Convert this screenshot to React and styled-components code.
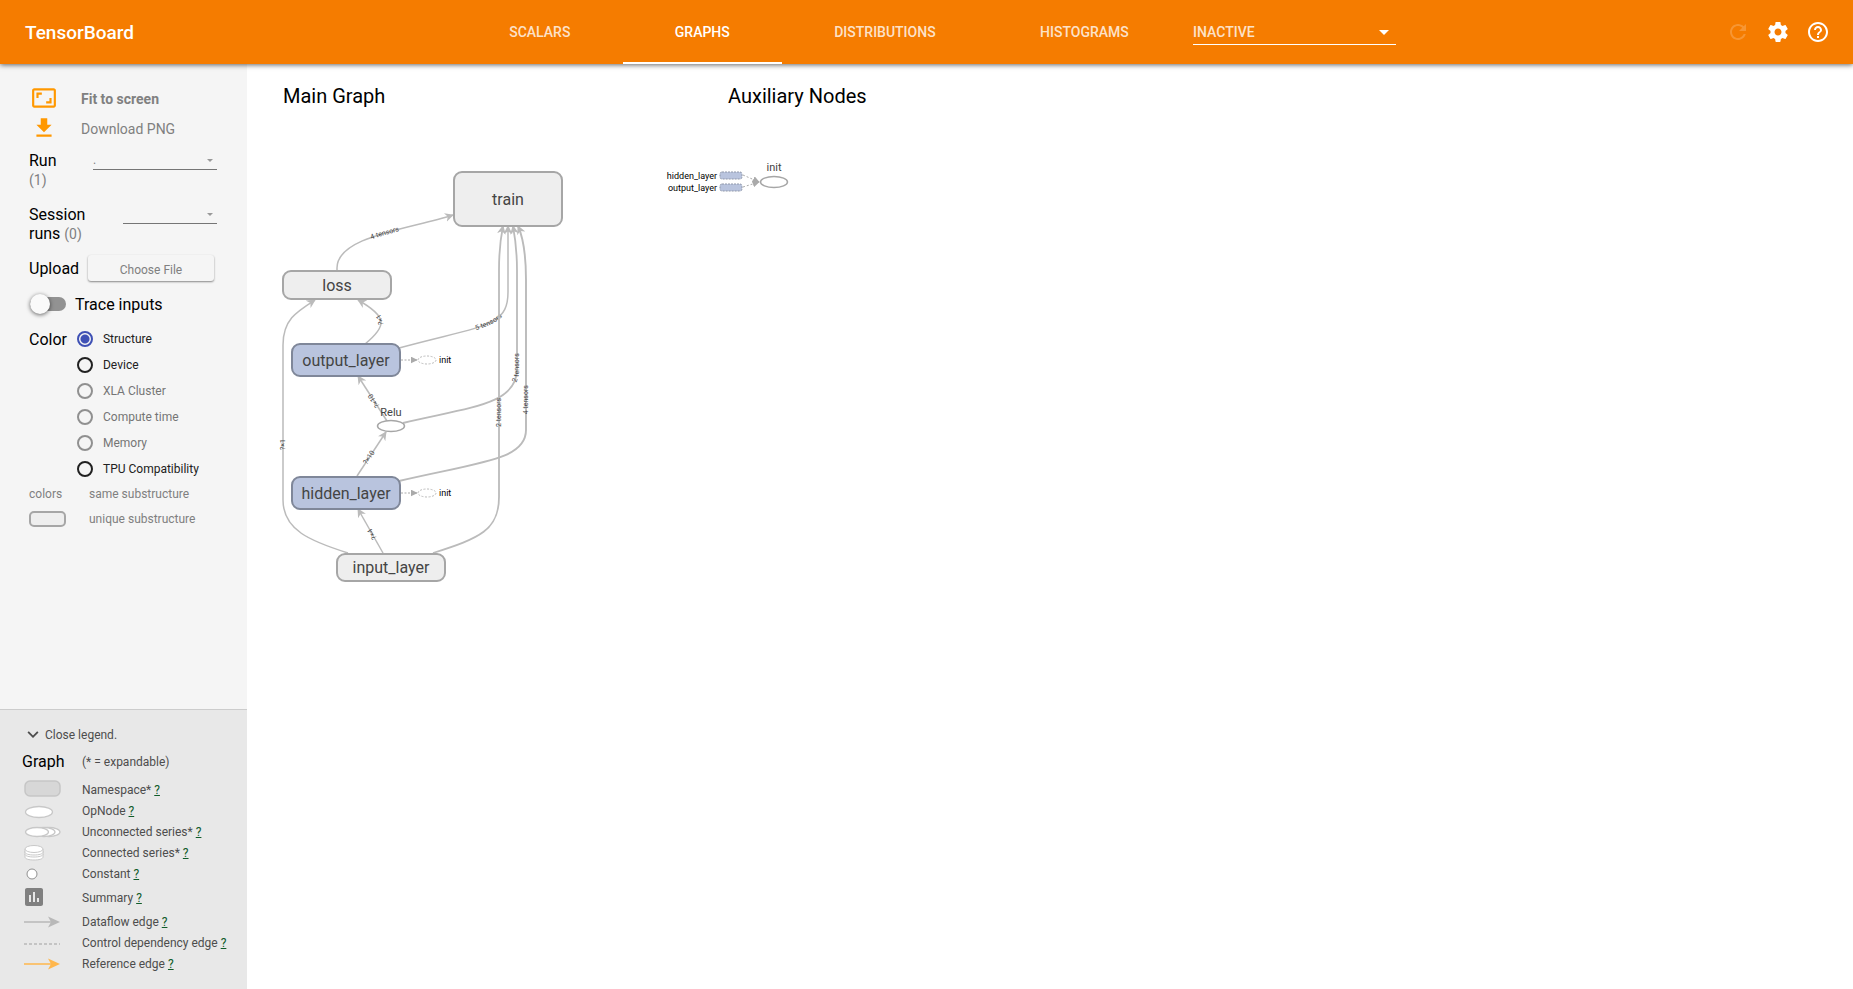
import React from 'react';
import styled, { createGlobalStyle, css } from 'styled-components';

const GlobalStyle = createGlobalStyle`
  *, *::before, *::after { box-sizing: border-box; }
  body { margin: 0; background: #fff; color: #000; font-family: Roboto, "Liberation Sans", sans-serif; }
  button, input, select { font: inherit; }
`;

const Page = styled.div`
  display: flex;
  flex-direction: column;
  min-height: 100vh;
`;

/* ---------- Header ---------- */

const Header = styled.header`
  position: relative;
  z-index: 1;
  display: flex;
  align-items: center;
  height: 64px;
  padding: 0 23px 0 25px;
  background: #f57c00;
  color: #fff;
  box-shadow: 0 1px 5px rgba(0, 0, 0, 0.6);
`;

const Brand = styled.h1`
  flex: 0 0 432px;
  margin: 0;
  font-size: 19px;
  font-weight: 500;
`;

const Tabs = styled.nav`
  display: flex;
  flex: 0 1 724px;
  align-self: stretch;
  margin-right: 12px;
`;

const Tab = styled.button`
  flex: 1 1 auto;
  padding: 2px 12px 0;
  border: 0;
  border-bottom: 2px solid ${(p) => (p.$active ? '#fff' : 'transparent')};
  background: none;
  color: ${(p) => (p.$active ? '#fff' : 'rgba(255, 255, 255, 0.8)')};
  font-size: 14px;
  font-weight: 500;
`;

const Dropdown = styled.span`
  position: relative;
  display: block;
  flex: 0 0 auto;
  width: ${(p) => p.$width}px;
  color: ${(p) => p.$arrow};

  &::after {
    content: '';
    position: absolute;
    right: ${(p) => p.$inset}px;
    top: 50%;
    margin-top: -2px;
    border: solid transparent;
    border-width: ${(p) => p.$size}px ${(p) => p.$size}px 0;
    border-top-color: currentColor;
    pointer-events: none;
  }
`;

const HeaderSelect = styled.select`
  appearance: none;
  display: block;
  width: 100%;
  height: 26px;
  padding: 0;
  border: 0;
  border-bottom: 1px solid #fff;
  border-radius: 0;
  background: none;
  color: rgba(255, 255, 255, 0.8);
  font-size: 14px;
  font-weight: 500;
`;

const HeaderActions = styled.div`
  display: flex;
  gap: 16px;
  margin-left: auto;
`;

const IconButton = styled.button`
  display: block;
  width: 24px;
  height: 24px;
  padding: 0;
  border: 0;
  background: none;
  color: ${(p) => (p.disabled ? 'rgba(255, 255, 255, 0.2)' : '#fff')};
`;

const Icon = ({ d, size = 24 }) => (
  <svg width={size} height={size} viewBox="0 0 24 24" fill="currentColor" aria-hidden="true">
    <path d={d} />
  </svg>
);

const PATHS = {
  refresh:
    'M17.65 6.35C16.2 4.9 14.21 4 12 4c-4.42 0-7.99 3.58-7.99 8s3.57 8 7.99 8c3.73 0 6.84-2.55 7.73-6h-2.08c-.82 2.33-3.04 4-5.65 4-3.31 0-6-2.69-6-6s2.69-6 6-6c1.66 0 3.14.69 4.22 1.78L13 11h7V4l-2.35 2.35z',
  settings:
    'M19.43 12.98c.04-.32.07-.64.07-.98s-.03-.66-.07-.98l2.11-1.65c.19-.15.24-.42.12-.64l-2-3.46c-.12-.22-.39-.3-.61-.22l-2.49 1c-.52-.4-1.08-.73-1.69-.98l-.38-2.65C14.46 2.18 14.25 2 14 2h-4c-.25 0-.46.18-.49.42l-.38 2.65c-.61.25-1.17.59-1.69.98l-2.49-1c-.23-.09-.49 0-.61.22l-2 3.46c-.13.22-.07.49.12.64l2.11 1.65c-.04.32-.07.65-.07.98s.03.66.07.98l-2.11 1.65c-.19.15-.24.42-.12.64l2 3.46c.12.22.39.3.61.22l2.49-1c.52.4 1.08.73 1.69.98l.38 2.65c.03.24.24.42.49.42h4c.25 0 .46-.18.49-.42l.38-2.65c.61-.25 1.17-.59 1.69-.98l2.49 1c.23.09.49 0 .61-.22l2-3.46c.12-.22.07-.49-.12-.64l-2.11-1.65zM12 15.5c-1.93 0-3.5-1.57-3.5-3.5s1.57-3.5 3.5-3.5 3.5 1.57 3.5 3.5-1.57 3.5-3.5 3.5z',
  help:
    'M11 18h2v-2h-2v2zm1-16C6.48 2 2 6.48 2 12s4.48 10 10 10 10-4.48 10-10S17.52 2 12 2zm0 18c-4.41 0-8-3.59-8-8s3.59-8 8-8 8 3.59 8 8-3.59 8-8 8zm0-14c-2.21 0-4 1.79-4 4h2c0-1.1.9-2 2-2s2 .9 2 2c0 2-3 1.75-3 5h2c0-2.25 3-2.5 3-5 0-2.21-1.79-4-4-4z',
  fit:
    'M19 12h-2v3h-3v2h5v-5zM7 9h3V7H5v5h2V9zm14-6H3c-1.1 0-2 .9-2 2v14c0 1.1.9 2 2 2h18c1.1 0 2-.9 2-2V5c0-1.1-.9-2-2-2zm0 16.01H3V4.99h18v14.02z',
  download: 'M19 9h-4V3H9v6H5l7 7 7-7zM5 18v2h14v-2H5z',
  chevron: 'M7.41 7.84L12 12.42l4.59-4.58L18 9.25l-6 6-6-6z',
  chart:
    'M19 3H5c-1.1 0-2 .9-2 2v14c0 1.1.9 2 2 2h14c1.1 0 2-.9 2-2V5c0-1.1-.9-2-2-2zM9 17H7v-7h2v7zm4 0h-2V7h2v10zm4 0h-2v-4h2v4z',
};

/* ---------- Sidebar ---------- */

const Body = styled.div`
  display: flex;
  flex: 1;
`;

const Sidebar = styled.aside`
  display: flex;
  flex: 0 0 247px;
  flex-direction: column;
  justify-content: space-between;
  background: #f5f5f5;
`;

const Controls = styled.div`
  padding: 20px 30px 0 29px;
`;

const Actions = styled.div`
  margin-bottom: 7px;
`;

const ActionButton = styled.button`
  display: flex;
  align-items: center;
  gap: 24px;
  width: 100%;
  height: 30px;
  padding: 0 0 0 2px;
  border: 0;
  background: none;
  color: #808080;
  font-size: 14px;
  font-weight: ${(p) => (p.$strong ? 700 : 400)};

  svg {
    margin-bottom: 2px;
    color: #ff9800;
  }
`;

const Field = styled.div`
  display: flex;
  align-items: flex-start;
  justify-content: space-between;
  height: ${(p) => p.$height}px;
`;

const Label = styled.label`
  width: ${(p) => (p.$width ? `${p.$width}px` : 'auto')};
  font-size: 16px;
  line-height: 19px;
`;

const Count = styled.span`
  color: #808080;
  font-size: 14px;
`;

const FieldSelect = styled.select`
  appearance: none;
  display: block;
  width: 100%;
  height: 19px;
  padding: 0;
  border: 0;
  border-bottom: 1px solid #757575;
  border-radius: 0;
  background: none;
  color: #808080;
  font-size: 12px;
`;

const FileButton = styled.button`
  width: 126px;
  height: 26px;
  margin: -4px 3px 0 0;
  padding: 3px 0 0;
  border: 0;
  border-radius: 3px;
  background: #f5f5f5;
  box-shadow: 0 1px 2px rgba(0, 0, 0, 0.45);
  color: #808080;
  font-size: 12px;
`;

const Toggle = styled.label`
  display: flex;
  align-items: center;
  gap: 9px;
  height: 20px;
  font-size: 16px;
`;

const ToggleInput = styled.input`
  appearance: none;
  position: relative;
  width: 37px;
  height: 20px;
  margin: 0;

  &::before {
    content: '';
    position: absolute;
    inset: 3px 0 3px 1px;
    border-radius: 7px;
    background: #929292;
  }

  &::after {
    content: '';
    position: absolute;
    top: 0;
    left: 1px;
    width: 20px;
    height: 20px;
    border-radius: 50%;
    background: #fafafa;
    box-shadow: 0 1px 4px rgba(0, 0, 0, 0.6);
  }
`;

const ColorField = styled.fieldset`
  display: flex;
  gap: 10px;
  margin: 16px 0 0;
  padding: 0;
  border: 0;
`;

const FieldTitle = styled.span`
  font-size: 16px;
  line-height: 19px;
`;

const RadioList = styled.div`
  display: flex;
  flex-direction: column;
  gap: 10px;
  padding-top: 1px;
`;

const RadioLabel = styled.label`
  display: flex;
  align-items: center;
  gap: 10px;
  height: 16px;
  color: ${(p) => (p.$disabled ? '#757575' : '#212121')};
  font-size: 12px;
`;

const Radio = styled.input`
  appearance: none;
  width: 16px;
  height: 16px;
  margin: 0;
  border: 2px solid #212121;
  border-radius: 50%;

  &:disabled { border-color: #909090; }

  &:checked {
    border-color: #3f51b5;
    background: radial-gradient(circle, #3f51b5 4px, transparent 5px);
  }
`;

const Key = styled.dl`
  display: grid;
  grid-template-columns: 60px 1fr;
  align-items: center;
  row-gap: 9px;
  margin: 9px 0 0;
  color: #808080;
  font-size: 12px;
  line-height: 16px;

  dt, dd { margin: 0; }
`;

const Swatch = styled.span`
  display: block;
  width: 37px;
  height: 16px;
  border: 2px solid #a6a6a6;
  border-radius: 5px;
  background: #eee;
`;

const Legend = styled.section`
  padding: 16px 8px 15px 22px;
  border-top: 1px solid #ccc;
  background: #e8e8e8;
  color: #4d4d4d;
  font-size: 12px;
`;

const LegendToggle = styled.button`
  display: flex;
  align-items: center;
  gap: 1px;
  height: 18px;
  padding: 0;
  border: 0;
  background: none;
  color: #4d4d4d;
  font-size: 12px;
`;

const LegendHead = styled.div`
  display: flex;
  align-items: center;
  height: 35px;
`;

const LegendTitle = styled.h2`
  flex: 0 0 60px;
  margin: 0;
  color: #000;
  font-size: 16px;
  font-weight: 400;
`;

const LegendItem = styled.div`
  display: flex;
  align-items: center;
  height: ${(p) => (p.$tall ? 27 : 21)}px;

  > svg { flex: 0 0 40px; margin-right: 20px; }
`;

const HelpLink = styled.a`
  margin-left: 3px;
  color: #0f5b28;
`;

const shape = { fill: '#fff', stroke: '#c8c8c8', strokeWidth: 1.3 };

const Disc = ({ y }) => <path d={`M3 ${y}v3c0 2 4 3 9 3s9-1 9-3v-3`} {...shape} strokeWidth="1" />;

const ArrowGlyph = ({ color }) => (
  <>
    <path d="M2 10H32" stroke={color} strokeWidth="1.5" />
    <path d="M26 4.500L38 10L26 15.500L29 10Z" fill={color} />
  </>
);

const LEGEND = [
  ['Namespace*', <rect x="3" y="1" width="35" height="15" rx="5" fill="#d7d7d7" stroke="#c6c6c6" strokeWidth="1.500" />],
  ['OpNode', <ellipse cx="17" cy="11" rx="13.500" ry="5.500" {...shape} />],
  [
    'Unconnected series*',
    <>
      <ellipse cx="27" cy="10" rx="11" ry="4.500" {...shape} />
      <ellipse cx="22" cy="10" rx="11" ry="4.500" {...shape} />
      <ellipse cx="15" cy="10" rx="11.500" ry="4.500" {...shape} />
    </>,
  ],
  [
    'Connected series*',
    <>
      <Disc y={11} />
      <Disc y={8} />
      <Disc y={6} />
      <ellipse cx="12" cy="6" rx="9" ry="3.500" {...shape} strokeWidth="1" />
    </>,
  ],
  ['Constant', <circle cx="10" cy="10" r="5" fill="#fff" stroke="#909090" />],
  ['Summary', <path d={PATHS.chart} fill="#808080" transform="translate(0 -3)" />, true],
  ['Dataflow edge', <ArrowGlyph color="#b8b8b8" />],
  ['Control dependency edge', <path d="M2 11H38" stroke="#b8b8b8" strokeWidth="1.300" strokeDasharray="3 2" />],
  ['Reference edge', <ArrowGlyph color="#ffb74d" />],
];

const RADIOS = [
  ['Structure', false],
  ['Device', false],
  ['XLA Cluster', true],
  ['Compute time', true],
  ['Memory', true],
  ['TPU Compatibility', false],
];

/* ---------- Graph canvas ---------- */

const Main = styled.main`
  flex: 1;
  min-width: 0;
  padding: 20px 0 0 36px;
`;

const Headings = styled.div`
  display: flex;
`;

const Heading = styled.h2`
  flex: 0 0 445px;
  margin: 0;
  font-size: 20px;
  font-weight: 400;
  line-height: 24px;
`;

const Scene = styled.svg`
  display: block;
  overflow: visible;
`;

const nodeText = css`
  fill: #444;
  text-anchor: middle;
`;
const NodeLabel = styled.text`${nodeText} font-size: 16px; dominant-baseline: central;`;
const OpLabel = styled.text`${nodeText} font-size: 11px;`;
const AnnotationLabel = styled.text`
  fill: #000;
  text-anchor: ${(p) => (p.$end ? 'end' : 'start')};
  font-size: 9px;
`;
const EdgeLabel = styled.text`fill: #444; text-anchor: middle; font-size: 7px;`;
const Edge = styled.path`
  fill: none;
  stroke: #bbb;
  stroke-width: ${(p) => p.$weight || 1.5};
`;

const NODES = [
  ['train', 454, 172, 54, false],
  ['loss', 283, 271, 28, false],
  ['output_layer', 292, 344, 32, true],
  ['hidden_layer', 292, 477, 32, true],
  ['input_layer', 337, 554, 27, false],
];

const EDGES = [
  { id: 'loss-train', d: 'M337 270V268C337 236 410 229 453 215', text: '4 tensors', at: '48%' },
  { id: 'input-loss', d: 'M348 553C310 541 283 530 283 500V345C283 320 296 312 315 300', text: '?×1', at: '48%' },
  { id: 'output-loss', d: 'M365 344C387 326 388 317 358 300', text: '?×1', at: '50%' },
  { id: 'output-train', d: 'M399 348C483 325 508 328 508 292V226', text: '5 tensors', at: '47%' },
  { id: 'relu-output', d: 'M387 421L358 376', text: '?×10', at: '45%' },
  { id: 'relu-train', d: 'M403 423C470 407 517 405 517 369V270Q517 248 513 226', text: '2 tensors', at: '49%', weight: 1.8 },
  { id: 'hidden-relu', d: 'M357 476L386 432', text: '?×10', at: '42%' },
  { id: 'hidden-train', d: 'M399 481C480 462 526 460 526 430V280Q526 244 518 226', text: '4 tensors', at: '50%', weight: 1.9 },
  { id: 'input-hidden', d: 'M383 553L358 509', text: '?×4', at: '43%' },
  { id: 'input-train', d: 'M433 553C480 538 499 530 499 497V270Q499 246 503 226', text: '2 tensors', at: '49%', weight: 1.8 },
];

const Graph = () => (
  <Scene width="100%" height="520" role="img" aria-label="Computation graph">
    <defs>
      <marker id="arrow" viewBox="0 0 10 10" refX="9" refY="5" markerWidth="9" markerHeight="9" markerUnits="userSpaceOnUse" orient="auto">
        <path d="M0 0L10 5L0 10L3 5Z" fill="#bbb" />
      </marker>
      <marker id="dark-arrow" viewBox="0 0 10 10" refX="9" refY="5" markerWidth="7" markerHeight="7" markerUnits="userSpaceOnUse" orient="auto">
        <path d="M0 0L10 5L0 10Z" fill="#aaa" />
      </marker>
    </defs>
    <g transform="translate(-283 -108)">
      {EDGES.map((e) => (
        <g key={e.id}>
          <Edge id={e.id} d={e.d} $weight={e.weight} markerEnd="url(#arrow)" />
          <EdgeLabel dy="2">
            <textPath href={`#${e.id}`} startOffset={e.at}>{e.text}</textPath>
          </EdgeLabel>
        </g>
      ))}
      {NODES.map(([name, x, y, h, tinted]) => (
        <g key={name}>
          <rect x={x} y={y} width="108" height={h} rx="8" fill={tinted ? '#b9c4de' : '#eee'} stroke={tinted ? '#7f8799' : '#a6a6a6'} strokeWidth="2" />
          <NodeLabel x={x + 54} y={y + h / 2}>{name}</NodeLabel>
        </g>
      ))}
      <ellipse cx="391" cy="426" rx="13.500" ry="5.500" fill="#fff" stroke="#a6a6a6" strokeWidth="1.500" />
      <OpLabel x="391" y="416">Relu</OpLabel>
      {[360, 493].map((y) => (
        <g key={y}>
          <path d={`M401 ${y}H417`} stroke="#aaa" strokeDasharray="2 1.500" markerEnd="url(#dark-arrow)" />
          <ellipse cx="427" cy={y} rx="9" ry="4" fill="#fff" stroke="#bbb" strokeDasharray="2 1.500" />
          <AnnotationLabel x="439" y={y + 3}>init</AnnotationLabel>
        </g>
      ))}
      {[['hidden_layer', 175], ['output_layer', 187]].map(([name, y]) => (
        <g key={name}>
          <AnnotationLabel $end x="717" y={y + 4}>{name}</AnnotationLabel>
          <rect x="720" y={y - 3} width="22" height="7" rx="2" fill="#b9c4de" stroke="#8f97aa" strokeDasharray="2 1" />
          <path d={`M743 ${y}L759 182`} fill="none" stroke="#aaa" strokeDasharray="2 2" markerEnd="url(#dark-arrow)" />
        </g>
      ))}
      <ellipse cx="774" cy="182" rx="13.500" ry="5.500" fill="#fff" stroke="#a6a6a6" strokeWidth="1.500" />
      <OpLabel x="774" y="171">init</OpLabel>
    </g>
  </Scene>
);

export default function App() {
  return (
    <Page>
      <GlobalStyle />
      <Header>
        <Brand>TensorBoard</Brand>
        <Tabs>
          <Tab>SCALARS</Tab>
          <Tab $active>GRAPHS</Tab>
          <Tab>DISTRIBUTIONS</Tab>
          <Tab>HISTOGRAMS</Tab>
        </Tabs>
        <Dropdown $width={203} $arrow="#fff" $inset={7} $size={5}>
          <HeaderSelect aria-label="Inactive dashboards">
            <option>INACTIVE</option>
          </HeaderSelect>
        </Dropdown>
        <HeaderActions>
          <IconButton disabled aria-label="Refresh"><Icon d={PATHS.refresh} /></IconButton>
          <IconButton aria-label="Settings"><Icon d={PATHS.settings} /></IconButton>
          <IconButton aria-label="Help"><Icon d={PATHS.help} /></IconButton>
        </HeaderActions>
      </Header>
      <Body>
        <Sidebar>
          <Controls>
            <Actions>
              <ActionButton $strong><Icon d={PATHS.fit} size={26} />Fit to screen</ActionButton>
              <ActionButton><Icon d={PATHS.download} size={26} />Download PNG</ActionButton>
            </Actions>
            <Field $height={54}>
              <Label $width={40} htmlFor="run">Run <Count>(1)</Count></Label>
              <Dropdown $width={124} $arrow="#999" $inset={4} $size={3}>
                <FieldSelect id="run"><option>.</option></FieldSelect>
              </Dropdown>
            </Field>
            <Field $height={54}>
              <Label $width={80} htmlFor="session">Session runs <Count>(0)</Count></Label>
              <Dropdown $width={94} $arrow="#999" $inset={4} $size={3}>
                <FieldSelect id="session"><option aria-label="None" /></FieldSelect>
              </Dropdown>
            </Field>
            <Field $height={35}>
              <Label htmlFor="upload">Upload</Label>
              <FileButton id="upload">Choose File</FileButton>
            </Field>
            <Toggle><ToggleInput type="checkbox" role="switch" />Trace inputs</Toggle>
            <ColorField>
              <FieldTitle>Color</FieldTitle>
              <RadioList>
                {RADIOS.map(([name, disabled], i) => (
                  <RadioLabel key={name} $disabled={disabled}>
                    <Radio type="radio" name="color" disabled={disabled} defaultChecked={i === 0} />
                    {name}
                  </RadioLabel>
                ))}
              </RadioList>
            </ColorField>
            <Key>
              <dt>colors</dt>
              <dd>same substructure</dd>
              <dt><Swatch /></dt>
              <dd>unique substructure</dd>
            </Key>
          </Controls>
          <Legend>
            <LegendToggle><Icon d={PATHS.chevron} size={22} />Close legend.</LegendToggle>
            <LegendHead>
              <LegendTitle>Graph</LegendTitle>
              (* = expandable)
            </LegendHead>
            {LEGEND.map(([name, glyph, tall]) => (
              <LegendItem key={name} $tall={tall}>
                <svg width="40" height="20" viewBox="0 0 40 20" aria-hidden="true">{glyph}</svg>
                {name}
                <HelpLink href="#legend">?</HelpLink>
              </LegendItem>
            ))}
          </Legend>
        </Sidebar>
        <Main>
          <Headings>
            <Heading>Main Graph</Heading>
            <Heading>Auxiliary Nodes</Heading>
          </Headings>
          <Graph />
        </Main>
      </Body>
    </Page>
  );
}
